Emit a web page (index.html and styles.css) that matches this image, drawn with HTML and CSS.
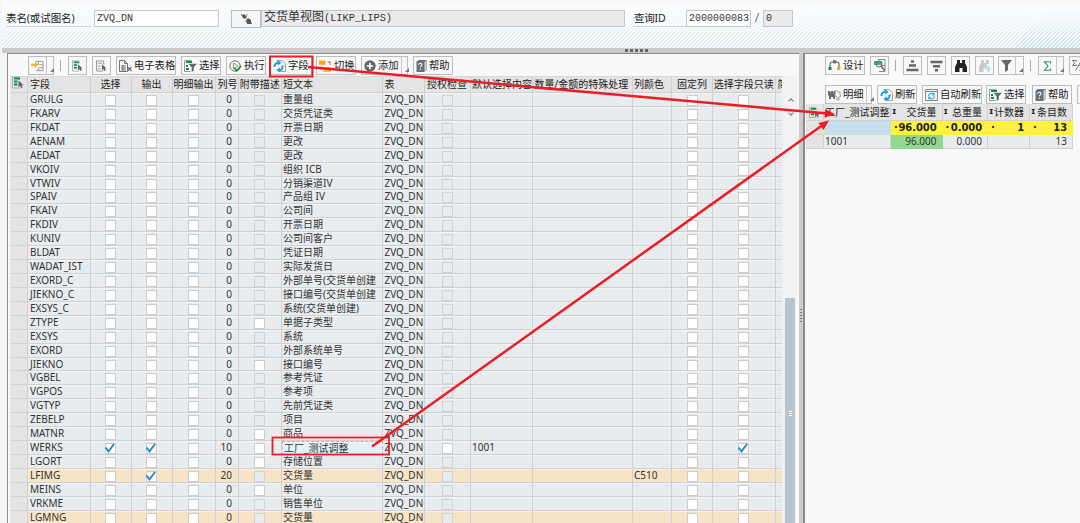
FILE: index.html
```
<!DOCTYPE html>
<html lang="zh-CN">
<head>
<meta charset="utf-8">
<title>ZVQ_DN</title>
<link rel="stylesheet" href="styles.css">
</head>
<body>
<svg class="sprite" aria-hidden="true">
  <symbol id="i-insert" viewBox="0 0 14 13"><path d="M5 1.5h8v10H5M8 5h5M8 8.500h5M8 1.500v3M8 9v3" fill="none" stroke="#999" stroke-width="1"/><path d="M0 4h4V1.800L8.500 5 4 8.300V6.200H0z" fill="#f5b324"/></symbol>
  <symbol id="i-all" viewBox="0 0 12 12"><path d="M.5.5h7.500M.5 0v11.500H8" fill="none" stroke="#a9a9a9"/><path d="M2 2h6M2 5h3.500M2 8h3.500" stroke="#07924a" stroke-width="2"/><path d="M6.500 4v7l1.600-1.700 1.100 2.200 1.400-.6-1-2.200h2z" fill="#5f6468"/></symbol>
  <symbol id="i-none" viewBox="0 0 12 12"><path d="M.5.5h8v4M.5 0v11.500H8M2 3h5M2 6h3.500M2 9h3" fill="none" stroke="#909090"/><path d="M6.500 4v7l1.600-1.700 1.100 2.200 1.400-.6-1-2.200h2z" fill="#5f6468"/></symbol>
  <symbol id="i-sheet" viewBox="0 0 13 12"><path d="M.5.500h5l3 3v8h-8zM5.500.5v3h3M2 6h5M2 8h5M2 10h5M4 5v5" fill="none" stroke="#737373"/><path d="M8.500 7l4 4m0-4l-4 4" stroke="#666" stroke-width="1.100"/></symbol>
  <symbol id="i-filter" viewBox="0 0 13 12"><path d="M7.500.5h-7v11h6" fill="none" stroke="#9b9b9b"/><path d="M2 2h6M2 6h2M2 9h3" stroke="#07924a" stroke-width="2"/><path d="M4.500 3.800H13L9.800 7.300v3.200L7.700 12V7.300z" fill="#62686b"/></symbol>
  <symbol id="i-run" viewBox="0 0 13 12"><circle cx="6" cy="6" r="5.200" fill="none" stroke="#767676"/><path d="M4.500 3l4.500 3-4.500 3z" fill="#fafafa" stroke="#777" stroke-width=".8"/><path d="M5.500 8l2.300 2.800L12 6" fill="none" stroke="#168b4b" stroke-width="1.700"/></symbol>
  <symbol id="i-refresh" viewBox="0 0 13 12"><path d="M3.500.5H9l3.500 3v8H5" fill="none" stroke="#a2a2a2"/><path d="M5.200 2.700C2.600 3 1.200 4.800 1.500 7M6.200 10.300C8.800 10 10 8 9.500 5.500" fill="none" stroke="#189fe2" stroke-width="2"/><path d="M4.500 0L8.500 2.800 4.800 5.500zM7 7.500L3.200 10 7 12z" fill="#189fe2"/></symbol>
  <symbol id="i-switch" viewBox="0 0 13 12"><path d="M0 .5h6.500v4.300H0zM4.500 7.500H12v4.300H4.500z" fill="#f3ac0b"/><path d="M8.500 2h2.700v3M2 6.500v3h1" fill="none" stroke="#777"/></symbol>
  <symbol id="i-add" viewBox="0 0 12 12"><circle cx="6" cy="6" r="5.700" fill="#60656a"/><path d="M6 2.800v6.400M2.800 6h6.400" stroke="#fff" stroke-width="1.700"/></symbol>
  <symbol id="i-help" viewBox="0 0 11 12"><path d="M.5 1.500L3 0h7.500v10L8 12H.5z" fill="#687079"/><path d="M8.500 2v9L10 9.800V1z" fill="#d5d8da"/><path d="M2.700 4.800c0-2.200 3.500-2 3.300 0C5.900 5.900 4.400 5.900 4.400 7.300M4.400 8.500v1.300" fill="none" stroke="#fff" stroke-width="1.100"/></symbol>
  <symbol id="i-design" viewBox="0 0 13 11"><path d="M2 7V4.500C2 2.800 3 2 4.500 2h4C10 2 11 2.800 11 4.500V7" fill="none" stroke="#686868" stroke-width="1.200"/><path d="M5 .300h3.200v3H5z" fill="#666"/><path d="M.5 7h3v3h-3z" fill="#16834a"/><path d="M9.200 7h3v3h-3z" fill="#eeaa17"/></symbol>
  <symbol id="i-view" viewBox="0 0 12 13"><path d="M3.500.5h7.500v12H5M11 6.500H8" fill="none" stroke="#858585"/><path d="M0 3h8M0 5h8" stroke="#07924a" stroke-width="1.600"/><circle cx="5" cy="5" r="3" fill="none" stroke="#666"/><path d="M7 7l3.500 4.500" stroke="#666" stroke-width="1.500"/></symbol>
  <symbol id="i-asc" viewBox="0 0 13 12"><path d="M5 1.500h3M3 5.500h7M.5 10h12" stroke="#62676a" stroke-width="2.400"/></symbol>
  <symbol id="i-desc" viewBox="0 0 13 12"><path d="M.5 2h12M3 6.300h7M5 10.300h3" stroke="#62676a" stroke-width="2.400"/></symbol>
  <symbol id="i-find" viewBox="0 0 12 12"><path d="M2 0h3v3h2V0h3v3l2 4v5H7.500V8h-3v4H0V7l2-4z" fill="currentColor"/></symbol>
  <symbol id="i-findn" viewBox="0 0 12 12"><path d="M2 0h3v3h2V0h3v4H8v4H4.500v4H0V7l2-4z" fill="#c8cbcd"/><path d="M9.500 6v6M6.500 9h6" stroke="#b3dbe9" stroke-width="1.700"/></symbol>
  <symbol id="i-funnel" viewBox="0 0 12 12"><path d="M0 0h11L7 5v5l-3 2V5z" fill="#62676a"/></symbol>
  <symbol id="i-sum" viewBox="0 0 8 10"><path d="M7 2.500V.7H1L4.500 5 1 9.200h6V7.500" fill="none" stroke="#239b5b" stroke-width="1.100"/></symbol>
  <symbol id="i-subsum" viewBox="0 0 12 11"><path d="M4.500 1.500V.5H.5L2.700 3 .5 5.500h4v-1M9.500.5L3.500 10.500M11.500 5.500h-4L9.700 8l-2.200 2.500h4" fill="none" stroke="#777"/></symbol>
  <symbol id="i-detail" viewBox="0 0 13 12"><path d="M0 2h2l1 2V2h2v2l1-2h1v8H5V8H3v2H1V7L0 6z" fill="#686d70"/><path d="M7 4l1-3 2 2h2v3l1 1-2 1v3H9V8L7 7z" fill="#f6f6f6" stroke="#888" stroke-width=".8"/></symbol>
  <symbol id="i-auto" viewBox="0 0 13 12"><path d="M.5.5h12v11H.5zM0 2.500h13" fill="none" stroke="#858585"/><path d="M3.500 7C3.500 4.500 7 3.500 9 5.500M9.500 7C9.500 10 6 10.800 4 9" fill="none" stroke="#25a5df" stroke-width="1.100"/><path d="M9.800 3.500v3H7zM3.200 7.500v3L6 8z" fill="#25a5df"/></symbol>
  <symbol id="i-link" viewBox="0 0 11 11"><path d="M0 1l2 1 1-1 3 3-2 2-2-1-1-2-1-1M5 7l2-2 3 2v2l1 2H6z" fill="#555"/><path d="M7 1L4 4M4 9l3-3" stroke="#777" stroke-width=".7"/></symbol>
</svg>

<header class="top">
  <label class="lbl lbl-table">表名(或试图名)</label>
  <div class="field f-name">ZVQ_DN</div>
  <div class="linkbtn"><svg width="11" height="11"><use href="#i-link"/></svg></div>
  <div class="field f-desc ro"><span class="cjk">交货单视图</span>(LIKP_LIPS)</div>
  <label class="lbl lbl-id">查询ID</label>
  <div class="field f-id">2000000083</div>
  <span class="slash">/</span>
  <div class="field f-ver ro">0</div>
</header>
<div class="hsplit"><i></i><i></i><i></i><i></i><i></i></div>

<main class="panes">
  <section class="left">
    <div class="bar bar-left" id="barLeft"></div>
    <div class="gridwrap">
      <div class="grid" id="grid"></div>
      <div class="scroll">
        <span class="arr up"></span><span class="arr down"></span>
        <div class="thumb"><i></i><i></i><i></i></div>
      </div>
    </div>
  </section>
  <div class="vsplit"><i></i><i></i><i></i><i></i><i></i></div>
  <section class="right">
    <div class="bar bar-r1" id="barR1"></div>
    <div class="bar bar-r2" id="barR2"></div>
    <div class="rrow rhead">
      <div class="sel"><svg width="11" height="11"><use href="#i-all"/></svg></div>
      <div class="first">工厂_测试调整</div>
      <div><b class="sg">ɪ</b>交货量</div><div><b class="sg">ɪ</b>总重量</div><div><b class="sg">ɪ</b>计数器</div><div><b class="sg">ɪ</b>条目数</div>
    </div>
    <div class="rrow rsum">
      <div class="sel"></div><div class="first"></div>
      <div><b>·</b>96.000</div><div><b>·</b>0.000</div><div><b>·</b>1</div><div><b>·</b>13</div>
    </div>
    <div class="rrow rdata">
      <div class="sel"></div><div class="first">1001</div>
      <div class="green">96.000</div><div>0.000</div><div></div><div>13</div>
    </div>
  </section>
</main>

<svg class="marks" width="1080" height="523" viewBox="0 0 1080 523">
  <g fill="none" stroke="#ed1c24">
    <rect x="270" y="56.500" width="42.500" height="20" stroke-width="2"/>
    <rect x="272.500" y="437.500" width="116.500" height="17" stroke-width="1.800"/>
    <path d="M308 67L828 113.600M372 446.500L822 125.500" stroke-width="2.500"/>
  </g>
  <path d="M835 114.300L824.500 117.800 825.300 109zM829 120.500L823.500 130 818.500 123z" fill="#ed1c24"/>
</svg>
<script src="script.js"></script>
</body>
</html>
```
FILE: styles.css
```
* { box-sizing: border-box; }
body {
  margin: 0; width: 1080px; height: 523px; overflow: hidden; position: relative;
  background: #f5f5f5; color: #333;
  font: 10px/14px "Noto Sans", "Noto Sans CJK SC", sans-serif;
  white-space: nowrap;
}
.sprite { display: none; }
svg { display: block; flex: none; }
.marks { position: absolute; left: 0; top: 0; }

/* header form */
.top {
  height: 48px; margin-left: 2px; padding: 10px 0 0 4px;
  display: flex; align-items: flex-start;
  background:
    linear-gradient(180deg, #f9f9f9 3px, rgba(252,253,254,.92) 8px, rgba(255,255,255,.45) 25px, rgba(255,255,255,0) 48px),
    repeating-linear-gradient(135deg, #cfe4ee 0 1px, #f4f9fb 1px 2.830px);
}
.lbl { line-height: 16px; border-bottom: 1px solid #ccd3d7; height: 17px; color: #222; }
.lbl-table { width: 85px; margin-right: 3px; font-size: 10.500px; letter-spacing: -.1px; }
.lbl-id { width: 53px; margin: 0 0 0 8px; padding-left: 1px; font-size: 10.500px; letter-spacing: -.2px; }
.field {
  height: 17px; border: 1px solid #c3c7c9; background: #fff; padding-left: 2px;
  font: 10px/15px "Liberation Mono", "Noto Sans CJK SC", monospace; color: #333;
}
.ro { background: #ebebeb; }
.cjk { font-size: 12px; }
.f-name { width: 125px; }
.linkbtn { width: 30px; height: 18px; margin-left: 12px; border: 1px solid #b9bdc0; background: #f4f5f5; padding: 2px 0 0 9px; }
.f-desc { width: 364px; font-size: 10.300px; }
.f-id { width: 65px; }
.slash { width: 12px; text-align: center; line-height: 16px; font-size: 12px; color: #777; }
.f-ver { width: 30px; }

.hsplit { height: 5px; margin-left: 2px; background: #cbcbcb; display: flex; gap: 2px; padding: 1px 0 0 623px; }
.hsplit i { width: 3px; height: 3px; background: #666; }

.panes { display: flex; height: 470px; padding-left: 7px; }
.left { width: 792px; border: solid #8a8a8a; border-width: 1px 0 0 1px; background: #f9f9f9; padding-left: 2px; }
.vsplit { width: 4px; background: #cbcbcb; padding: 256px 0 0 1px; display: flex; flex-direction: column; gap: 2px; }
.vsplit i { width: 2px; height: 1px; background: #777; }
.right { width: 277px; border: solid #8a8a8a; border-width: 1px 0 0 2px; background: #f9f9f9; overflow: hidden; padding-left: 1px; }

/* toolbars */
.bar { display: flex; align-items: flex-start; color: #222; }
.bar-left { height: 22px; padding: 2px 0 0 18px; }
.bar-r1 { height: 31px; padding: 2px 0 0 19px; }
.bar-r2 { height: 19px; padding-left: 19px; }
.btn {
  height: 19px; flex: none; border: 1px solid #bcbcbc; background: #f8f8f8;
  display: flex; align-items: center; gap: 2px; padding-left: 2px; position: relative;
  font-size: 10.300px; line-height: 17px;
}
.btn.solo { justify-content: center; padding: 0; }
.btn .dd { margin-left: auto; width: 9px; height: 17px; border-left: 1px solid #c8c8c8; padding: 11px 0 0 3px; }
.btn .dd::after { content: ""; display: block; border: solid transparent; border-width: 0 0 4px 4px; border-bottom-color: #777; width: 0; }
.sep { width: 1px; height: 11px; margin-top: 4px; background: #aaa; flex: none; }

/* field grid */
.gridwrap { display: flex; height: 447px; overflow: hidden; }
.grid { width: 772px; }
.row {
  display: grid; height: 13.930px; overflow: hidden;
  grid-template-columns: 18px 62.500px 41px 41px 43px 23.500px 42.500px 101px 42px 46px 62px 100px 39.500px 41px 62.500px 6.500px;
}
.row > div {
  background: #e8ecef; border-right: 1px solid #cfd1d2; border-bottom: 1px solid #cfd1d2;
  box-shadow: inset 0 1px #f1f3f4; padding-left: 2px; line-height: 13px; overflow: hidden;
}
.row > .rh { background: #e4e4e4; box-shadow: none; }
.row > .c { display: flex; justify-content: center; padding: 2px 0 0; }
.row > .n { text-align: right; padding-right: 6px; }
.row > .cut { border-right: 0; }
.row.hot > div:not(.rh) { background: #f7e3c6; box-shadow: inset 0 1px #faeedd; }
.row > .txt { padding-left: 1.500px; }
.row > .cur { background: #e3f1f9; border: 1px dashed #e99; border-width: 1px; line-height: 12px; }
.row.head { height: 17px; }
.row.head > div { background: #e4e4e4; box-shadow: inset 0 1px #d9d9d9; line-height: 17px; color: #222; border-color: #d0d0d0; padding-right: 0; }
.row.head > .c { padding: 0; }
.box { width: 11px; height: 11px; border: 1.500px solid #ccc; background: #fff; flex: none; }
.box.off { background: #e8ecef; border-color: #d0d2d3; }
.box svg { margin: 0 0 0 -1px; overflow: visible; }

.scroll { width: 15px; padding: 17px 0 0 3px; display: flex; flex-direction: column; background: #f2f2f2; position: relative; }
.arr { width: 4px; height: 4px; border: solid #777; border-width: 1px 0 0 1px; transform: rotate(45deg); margin-left: 4px; flex: none; }
.up { margin-top: 6px; }
.down { transform: rotate(225deg); margin-top: 8px; }
.thumb { width: 10px; height: 240px; margin-top: 183px; background: #b8c3cc; display: flex; flex-direction: column; align-items: center; gap: 1px; padding-top: 113px; flex: none; }
.thumb i { width: 3px; height: 1px; background: #fff; }

/* result grid */
.rrow { display: grid; width: 267px; grid-template-columns: 18px 67px 51.500px 45.500px 42px 43px; height: 14px; }
.rrow > div { display: flex; justify-content: flex-end; align-items: center; line-height: 13px; border-right: 1px solid #d0d0d0; border-bottom: 1px solid #d0d0d0; padding-right: 5px; background: #e8ecef; }
.rrow > .first { justify-content: flex-start; padding: 0 0 0 1px; }
.rrow > .sel { background: #e4e4e4; padding: 0 3px 0 0; }
.rrow b { margin-right: auto; padding-left: 3px; }
.rhead { height: 17px; }
.rhead > div { background: #e4e4e4; color: #222; }
.rhead .sg { font: bold 8px/10px "DejaVu Sans", sans-serif; padding-left: 1px; }
.rsum { height: 14px; font: bold 10px/13px "DejaVu Sans", "Noto Sans", sans-serif; letter-spacing: -.1px; color: #222; }
.rsum > div { background: #fff23c; border-color: #fff23c; }
.rsum > .first { background: #c8deea; border-color: #c8deea; }
.rsum > .sel { border-bottom-color: #d0d0d0; }
.rdata > .green { background: #93d890; border-color: #93d890; }
```
FILE: script.js
```
const icon = (id, w, h) => `<svg width="${w}" height="${h}"><use href="#i-${id}"/></svg>`;

// Toolbar entries: [left margin, width, icon, icon width, icon height, label, has dropdown]
function bar(target, items) {
  document.getElementById(target).innerHTML = items.map(it => {
    if (it.length === 1) return `<span class="sep" style="margin-left:${it[0]}px"></span>`;
    const [m, w, id, iw, ih, label, dd] = it;
    return `<div class="btn${label || dd ? '' : ' solo'}" style="margin-left:${m}px;width:${w}px">` +
      icon(id, iw, ih) + (label ? `<span>${label}</span>` : '') + (dd ? '<span class="dd"></span>' : '') + '</div>';
  }).join('');
}
bar('barLeft', [
  [0, 26, 'insert', 13, 12, '', 1], [6], [7, 19, 'all', 11, 12], [5, 19, 'none', 11, 12],
  [5, 60, 'sheet', 13, 12, '电子表格'], [5, 40, 'filter', 13, 12, '选择'], [5, 40, 'run', 13, 12, '执行'],
  [4, 42, 'refresh', 13, 12, '字段'], [4, 40, 'switch', 13, 12, '切换'], [5, 47, 'add', 12, 12, '添加', 1],
  [5, 40, 'help', 11, 12, '帮助']
]);
bar('barR1', [
  [0, 40, 'design', 13, 11, '设计'], [5, 19, 'view', 12, 13], [6], [7, 19, 'asc', 13, 12], [5, 19, 'desc', 13, 12],
  [5, 19, 'find', 12, 12], [5, 19, 'findn', 12, 12], [4, 26, 'funnel', 12, 12, '', 1], [6],
  [7, 26, 'sum', 13, 10, '', 1], [5, 30, 'subsum', 12, 11, ' ']
]);
bar('barR2', [
  [0, 47, 'detail', 13, 12, '明细', 1], [5, 40, 'refresh', 13, 12, '刷新'], [5, 60, 'auto', 13, 12, '自动刷新'],
  [4, 40, 'filter', 13, 12, '选择'], [6, 40, 'help', 11, 12, '帮助'], [5, 20, 'none', 11, 12]
]);

// Field name and short text of each row
const rows = [
  ['GRULG', '重量组'], ['FKARV', '交货凭证类'], ['FKDAT', '开票日期'], ['AENAM', '更改'], ['AEDAT', '更改'],
  ['VKOIV', '组织 ICB'], ['VTWIV', '分销渠道IV'], ['SPAIV', '产品组 IV'], ['FKAIV', '公司间'], ['FKDIV', '开票日期'],
  ['KUNIV', '公司间客户'], ['BLDAT', '凭证日期'], ['WADAT_IST', '实际发货日'], ['EXORD_C', '外部单号(交货单创建'],
  ['JIEKNO_C', '接口编号(交货单创建'], ['EXSYS_C', '系统(交货单创建)'], ['ZTYPE', '单据子类型'], ['EXSYS', '系统'],
  ['EXORD', '外部系统单号'], ['JIEKNO', '接口编号'], ['VGBEL', '参考凭证'], ['VGPOS', '参考项'], ['VGTYP', '先前凭证类'],
  ['ZEBELP', '项目'], ['MATNR', '商品'], ['WERKS', '工厂_测试调整'], ['LGORT', '存储位置'], ['LFIMG', '交货量'],
  ['MEINS', '单位'], ['VRKME', '销售单位'], ['LGMNG', '交货量']
];
const describable = ['ZTYPE', 'JIEKNO', 'MATNR', 'WERKS', 'LGORT', 'MEINS'];
const tick = '<svg width="10" height="9"><path d="M0.500 3.500L3.500 7.500L9 0" fill="none" stroke="#1c86c4" stroke-width="1.900"/></svg>';
const box = (on, off) => `<div class="c"><span class="box${off ? ' off' : ''}">${on ? tick : ''}</span></div>`;
const head = ['选择', '输出', '明细输出'].map(t => `<div class="c">${t}</div>`).join('');
let html = `<div class="row head"><div class="rh">${icon('all', 12, 13)}</div><div>字段</div>${head}` +
  '<div>列号</div><div class="c">附带描述</div><div class="txt">短文本</div><div>表</div><div class="c">授权检查</div>' +
  '<div class="txt">默认选择内容</div><div>数量/金额的特殊处理</div><div class="txt">列颜色</div><div class="c">固定列</div>' +
  '<div class="c">选择字段只读</div><div class="cut">简</div></div>';
for (const [f, t] of rows) {
  const werks = f === 'WERKS', lf = f === 'LFIMG', hot = lf || f === 'LGMNG';
  html += `<div class="row${hot ? ' hot' : ''}"><div class="rh"></div><div>${f}</div>` +
    box(werks) + box(werks || lf) + box() + `<div class="n">${werks ? 10 : lf ? 20 : 0}</div>` +
    box(false, !describable.includes(f)) + `<div class="txt${werks ? ' cur' : ''}">${t}</div><div>ZVQ_DN</div>` +
    box(false, !werks) + `<div class="txt">${werks ? '1001' : ''}</div><div></div><div class="txt">${lf ? 'C510' : ''}</div>` +
    box() + box(werks) + '<div class="cut"></div></div>';
}
document.getElementById('grid').innerHTML = html;
```
